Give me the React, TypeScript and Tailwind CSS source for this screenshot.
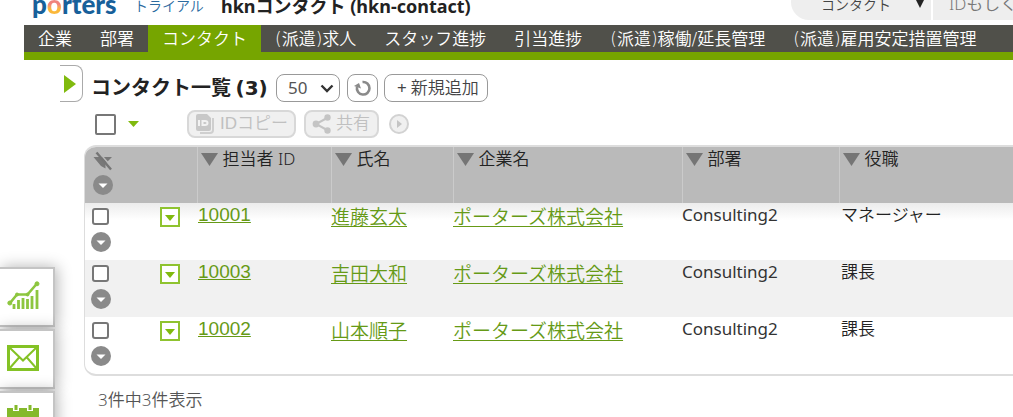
import { useState } from "react";

interface Contact {
  id: string;
  name: string;
  company: string;
  department: string;
  title: string;
}

const tabs = [
  "企業",
  "部署",
  "コンタクト",
  "(派遣)求人",
  "スタッフ進捗",
  "引当進捗",
  "(派遣)稼働/延長管理",
  "(派遣)雇用安定措置管理",
];

const contacts: Contact[] = [
  {
    id: "10001",
    name: "進藤玄太",
    company: "ポーターズ株式会社",
    department: "Consulting2",
    title: "マネージャー",
  },
  {
    id: "10003",
    name: "吉田大和",
    company: "ポーターズ株式会社",
    department: "Consulting2",
    title: "課長",
  },
  {
    id: "10002",
    name: "山本順子",
    company: "ポーターズ株式会社",
    department: "Consulting2",
    title: "課長",
  },
];

const columns = ["担当者 ID", "氏名", "企業名", "部署", "役職"];

function ExpandButton({ label }: { label: string }) {
  return (
    <button type="button" aria-label={label} className="block h-5 w-5">
      <svg viewBox="0 0 20 20" className="h-5 w-5">
        <circle cx="10" cy="10" r="10" fill="#8a8a8a" />
        <path d="M5.500 8.500h9L10 13z" fill="#fff" />
      </svg>
    </button>
  );
}

function SortIcon() {
  return (
    <svg viewBox="0 0 17 13" className="h-[13px] w-[17px] shrink-0">
      <path d="M0 0h17L8.500 13z" fill="#757575" />
    </svg>
  );
}

function FilterOffIcon() {
  return (
    <svg viewBox="0 0 20 20" className="h-5 w-5">
      <path d="M0.500 6H19L12.500 12.500V17.500L8 15z" fill="#787878" />
      <path d="M5.500 1L20 17.500" stroke="#bababa" strokeWidth="1.500" />
      <path d="M3.500 1.500L18 18.500" stroke="#757575" strokeWidth="2.400" />
    </svg>
  );
}

function ChartIcon() {
  return (
    <svg viewBox="0 0 34 30" className="h-[30px] w-[34px]" fill="#8dc63f" stroke="#8dc63f">
      <path
        d="M7 28v-5M11.500 28v-9M16 28v-11M20.500 28v-10M25 28v-13M30 28V9"
        strokeWidth="2.800"
      />
      <path d="M3 22L10 13.500h10.500L30 2.500" fill="none" strokeWidth="2.600" />
      <circle cx="2.800" cy="22" r="2" />
      <circle cx="10" cy="13.500" r="1.500" />
      <circle cx="20.500" cy="13.500" r="1.500" />
      <circle cx="30" cy="2.800" r="2" />
    </svg>
  );
}

function MailIcon() {
  return (
    <svg viewBox="0 0 32 28" className="h-7 w-8" fill="none" stroke="#84c225" strokeWidth="2">
      <rect x="1.500" y="3.500" width="29" height="23" strokeWidth="3" />
      <path d="M2 4l14 13.500L30 4M2 26l10.500-12M30 26L19.500 14" />
    </svg>
  );
}

function CalendarIcon() {
  return (
    <svg viewBox="0 0 32 32" className="h-8 w-8">
      <path d="M0 3h32v29H0zM3 12v17h26V12z" fill="#84b92b" fillRule="evenodd" />
      <path d="M9 0v6M23 0v6" stroke="#fff" strokeWidth="6" />
      <path d="M9 0v5M23 0v5" stroke="#84b92b" strokeWidth="3" />
    </svg>
  );
}

function SideMenu() {
  const items = [
    { label: "レポート", icon: <ChartIcon /> },
    { label: "メール", icon: <MailIcon /> },
    { label: "カレンダー", icon: <CalendarIcon /> },
  ];
  return (
    <aside className="fixed top-[267px] left-0 flex w-[55px] flex-col gap-0.5">
      {items.map((item) => (
        <button
          key={item.label}
          type="button"
          aria-label={item.label}
          className="flex h-[60px] items-start border-y-2 border-r-2 border-[#c4c4c4] bg-white pt-3 pl-[7px] shadow-[2px_0_14px_rgba(0,0,0,0.3)]"
        >
          {item.icon}
        </button>
      ))}
    </aside>
  );
}

function Header() {
  return (
    <header className="-mt-4 flex h-10 items-start justify-between">
      <div className="flex items-start pl-8 leading-[44px]">
        <a
          href="#home"
          className="w-[102px] font-['Lato'] text-[26px] leading-10 font-black text-[#17609a]"
        >
          p
          <span className="bg-linear-to-b from-[#f0837c] from-50% to-[#fbb83a] to-65% bg-clip-text text-transparent">
            o
          </span>
          rters
        </a>
        <span className="w-[87px] text-[14px] text-[#2c6b9f]">トライアル</span>
        <h1 className="text-[18px] font-bold whitespace-nowrap">
          hknコンタクト (hkn-contact)
        </h1>
      </div>
      <form className="flex h-9 w-[222px] shrink-0 gap-0.5 overflow-hidden rounded-l-full text-[#444]">
        <div className="relative flex">
          <select
            aria-label="検索対象"
            className="w-[140px] appearance-none bg-[#eee] pt-1 pl-[30px] text-[14px]"
          >
            <option>コンタクト</option>
          </select>
          <svg
            viewBox="0 0 10 10"
            className="pointer-events-none absolute right-1.5 bottom-3 h-2.5 w-2.5"
          >
            <path d="M0 0h10L5 10z" fill="#222" />
          </svg>
        </div>
        <input
          type="text"
          aria-label="検索"
          placeholder="IDもしくは名前"
          className="min-w-0 flex-1 bg-[#eee] pt-1 pl-4 text-[17px] placeholder:text-[#777]"
        />
      </form>
    </header>
  );
}

function Toolbar() {
  return (
    <div className="flex pt-[5px]">
      <button
        type="button"
        aria-label="検索パネルを開く"
        className="ml-[60px] flex h-[37px] w-[23px] items-center rounded-r-lg border border-l-0 border-[#aaa] pl-1"
      >
        <svg viewBox="0 0 12 18" className="h-[18px] w-3">
          <path d="M0 0l12 9L0 18z" fill="#80ba0e" />
        </svg>
      </button>
      <div className="pl-2">
        <div className="flex h-[45px] items-center">
          <h2 className="w-[185px] font-['Noto_Sans_CJK_JP','Noto_Sans',sans-serif] text-[20px] font-bold whitespace-nowrap">
            コンタクト一覧 <span className="font-['DejaVu_Sans']">(3)</span>
          </h2>
          <div className="relative mr-[7px]">
            <select
              aria-label="表示件数"
              className="h-7 w-16 appearance-none rounded-lg border border-[#999] bg-white pl-[11px] text-[17px] font-normal text-[#555]"
            >
              <option>50</option>
            </select>
            <svg
              viewBox="0 0 14 9"
              className="pointer-events-none absolute top-2.5 right-1.5 h-[9px] w-3.5"
            >
              <path d="M1.500 1.500L7 7l5.500-5.500" fill="none" stroke="#333" strokeWidth="2.400" />
            </svg>
          </div>
          <button
            type="button"
            aria-label="更新"
            className="mr-[6px] flex h-7 w-[31px] items-center justify-center rounded-lg border border-[#999]"
          >
            <svg viewBox="0 0 18 18" className="h-[18px] w-[18px]">
              <path
                d="M8.500 3a6.300 6.300 0 1 1-5.500 5"
                fill="none"
                stroke="#8a8a8a"
                strokeWidth="2.600"
              />
              <path d="M0 7L5 4l2 5.500z" fill="#8a8a8a" />
            </svg>
          </button>
          <button
            type="button"
            className="flex h-7 items-center gap-1 rounded-lg border border-[#999] pr-2 pl-3 text-[17px] leading-6 whitespace-nowrap text-[#444]"
          >
            <span className="font-normal">+</span>
            <span>新規追加</span>
          </button>
        </div>
        <div className="flex h-7 items-center font-['Liberation_Sans','Noto_Sans_CJK_JP',sans-serif] text-[17px] text-[#c0c0c0]">
          <input
            type="checkbox"
            aria-label="すべて選択"
            className="ml-1 h-[21px] w-[21px] appearance-none rounded-xs border-2 border-[#777] bg-white"
          />
          <button type="button" aria-label="選択メニュー" className="mr-12 ml-3">
            <svg viewBox="0 0 11 6" className="h-1.5 w-[11px]">
              <path d="M0 0h11L5.500 6z" fill="#80ba0e" />
            </svg>
          </button>
          <button
            type="button"
            disabled
            className="mr-2 flex h-7 w-[109px] items-center gap-1.5 rounded-lg border-2 border-[#d8d8d8] bg-[#f0f0f0] pl-[7px] whitespace-nowrap"
          >
            <svg viewBox="0 0 18 20" className="h-5 w-[18px] shrink-0">
              <path d="M4 19h10a3 3 0 0 0 3-3V4" fill="none" stroke="#cfcfcf" strokeWidth="2" />
              <path d="M0 2a2 2 0 0 1 2-2h9l4 4v11a2 2 0 0 1-2 2H2a2 2 0 0 1-2-2z" fill="#c8c8c8" />
              <path
                d="M3 6v6M6.500 6v6M6.500 7h2.500q2.500 0 2.500 2t-2.500 2H6.500"
                fill="none"
                stroke="#f2f2f2"
                strokeWidth="2"
              />
            </svg>
            IDコピー
          </button>
          <button
            type="button"
            disabled
            className="mr-2.5 flex h-7 w-[75px] items-center gap-1 rounded-lg border-2 border-[#d8d8d8] bg-[#f0f0f0] pl-1.5 whitespace-nowrap"
          >
            <svg viewBox="0 0 20 20" className="h-5 w-5 shrink-0" fill="#c4c4c4">
              <path d="M16 3.500L4 10l12 6.500" fill="none" stroke="#c4c4c4" strokeWidth="2" />
              <circle cx="15.500" cy="3.500" r="3.200" />
              <circle cx="4" cy="10" r="3.400" />
              <circle cx="15.500" cy="16.500" r="3.200" />
            </svg>
            共有
          </button>
          <button type="button" disabled aria-label="その他の操作">
            <svg viewBox="0 0 20 20" className="h-5 w-5">
              <circle cx="10" cy="10" r="9" fill="#f0f0f0" stroke="#d2d2d2" strokeWidth="2" />
              <path d="M8 6l5 4-5 4z" fill="#c4c4c4" />
            </svg>
          </button>
        </div>
      </div>
    </div>
  );
}

function ContactRow({ contact }: { contact: Contact }) {
  return (
    <tr className="h-[57px] from-[#ececec] to-white to-30% align-top first:bg-linear-to-b even:bg-[#f1f1f1]">
      <td className="pt-[5px] pl-1.5">
        <input
          type="checkbox"
          aria-label={`${contact.name}を選択`}
          className="mb-[7px] ml-px block h-[17px] w-[17px] appearance-none rounded-[3px] border-2 border-[#777] bg-white"
        />
        <ExpandButton label={`${contact.name}の詳細`} />
      </td>
      <td className="pt-1">
        <button
          type="button"
          aria-label={`${contact.name}のメニュー`}
          className="flex h-5 w-5 items-center justify-center border-2 border-[#8fc32f] bg-white pt-0.5"
        >
          <svg viewBox="0 0 10 6" className="h-1.5 w-2.5">
            <path d="M0 0h10L5 6z" fill="#80ba0e" />
          </svg>
        </button>
      </td>
      <td className="pl-px">
        <a
          href={`#contact-${contact.id}`}
          className="font-['Liberation_Sans',sans-serif] text-[19px] leading-6 text-[#669a16] underline"
        >
          {contact.id}
        </a>
      </td>
      <td className="pt-0.5">
        <a
          href={`#contact-${contact.id}`}
          className="text-[19px] leading-6 text-[#669a16] underline underline-offset-2"
        >
          {contact.name}
        </a>
      </td>
      <td className="pt-0.5">
        <a
          href="#company"
          className="text-[19px] leading-6 text-[#669a16] underline underline-offset-2"
        >
          {contact.company}
        </a>
      </td>
      <td className="text-[17px] leading-6 font-normal text-[#333]">{contact.department}</td>
      <td className="pl-0.5 text-[17px] leading-6">{contact.title}</td>
    </tr>
  );
}

export default function App() {
  const [activeTab, setActiveTab] = useState("コンタクト");

  return (
    <div className="h-screen overflow-hidden bg-white font-['Noto_Sans','Noto_Sans_CJK_JP',sans-serif] font-[350] text-[#222]">
      <Header />

      <nav className="mt-px ml-6 flex h-[35px] overflow-hidden border-b-8 border-[#76a500] bg-[#50504a] font-['DejaVu_Sans','Noto_Sans_CJK_JP',sans-serif]">
        {tabs.map((tab) => (
          <button
            key={tab}
            type="button"
            onClick={() => setActiveTab(tab)}
            className={`px-[14px] text-[17px] leading-6 whitespace-nowrap text-white ${
              tab === activeTab ? "bg-[#76a500]" : ""
            }`}
          >
            {tab}
          </button>
        ))}
      </nav>

      <main>
        <Toolbar />
        <div className="mt-[7px] ml-[84px] overflow-hidden rounded-l-xl border-y-2 border-l border-[#ddd]">
          <table className="w-full table-fixed text-left">
            <colgroup>
              <col className="w-[75px]" />
              <col className="w-[37px]" />
              <col className="w-[134px]" />
              <col className="w-[122px]" />
              <col className="w-[229px]" />
              <col className="w-[157px]" />
              <col />
            </colgroup>
            <thead>
              <tr className="h-14 bg-[#bababa] align-top">
                <th colSpan={2} className="pt-1 pl-2">
                  <button type="button" aria-label="絞り込み解除" className="mb-1 block">
                    <FilterOffIcon />
                  </button>
                  <ExpandButton label="すべて展開" />
                </th>
                {columns.map((column) => (
                  <th
                    key={column}
                    className="border-l border-[#cbcbcb] pl-[3px] text-[17px] leading-6 font-[350]"
                  >
                    <span className="flex items-center gap-[5px]">
                      <SortIcon />
                      {column}
                    </span>
                  </th>
                ))}
              </tr>
            </thead>
            <tbody>
              {contacts.map((contact) => (
                <ContactRow key={contact.id} contact={contact} />
              ))}
            </tbody>
          </table>
        </div>
        <p className="pt-3 pl-[98px] text-[17px] leading-6 text-[#555]">3件中3件表示</p>
      </main>

      <SideMenu />
    </div>
  );
}
